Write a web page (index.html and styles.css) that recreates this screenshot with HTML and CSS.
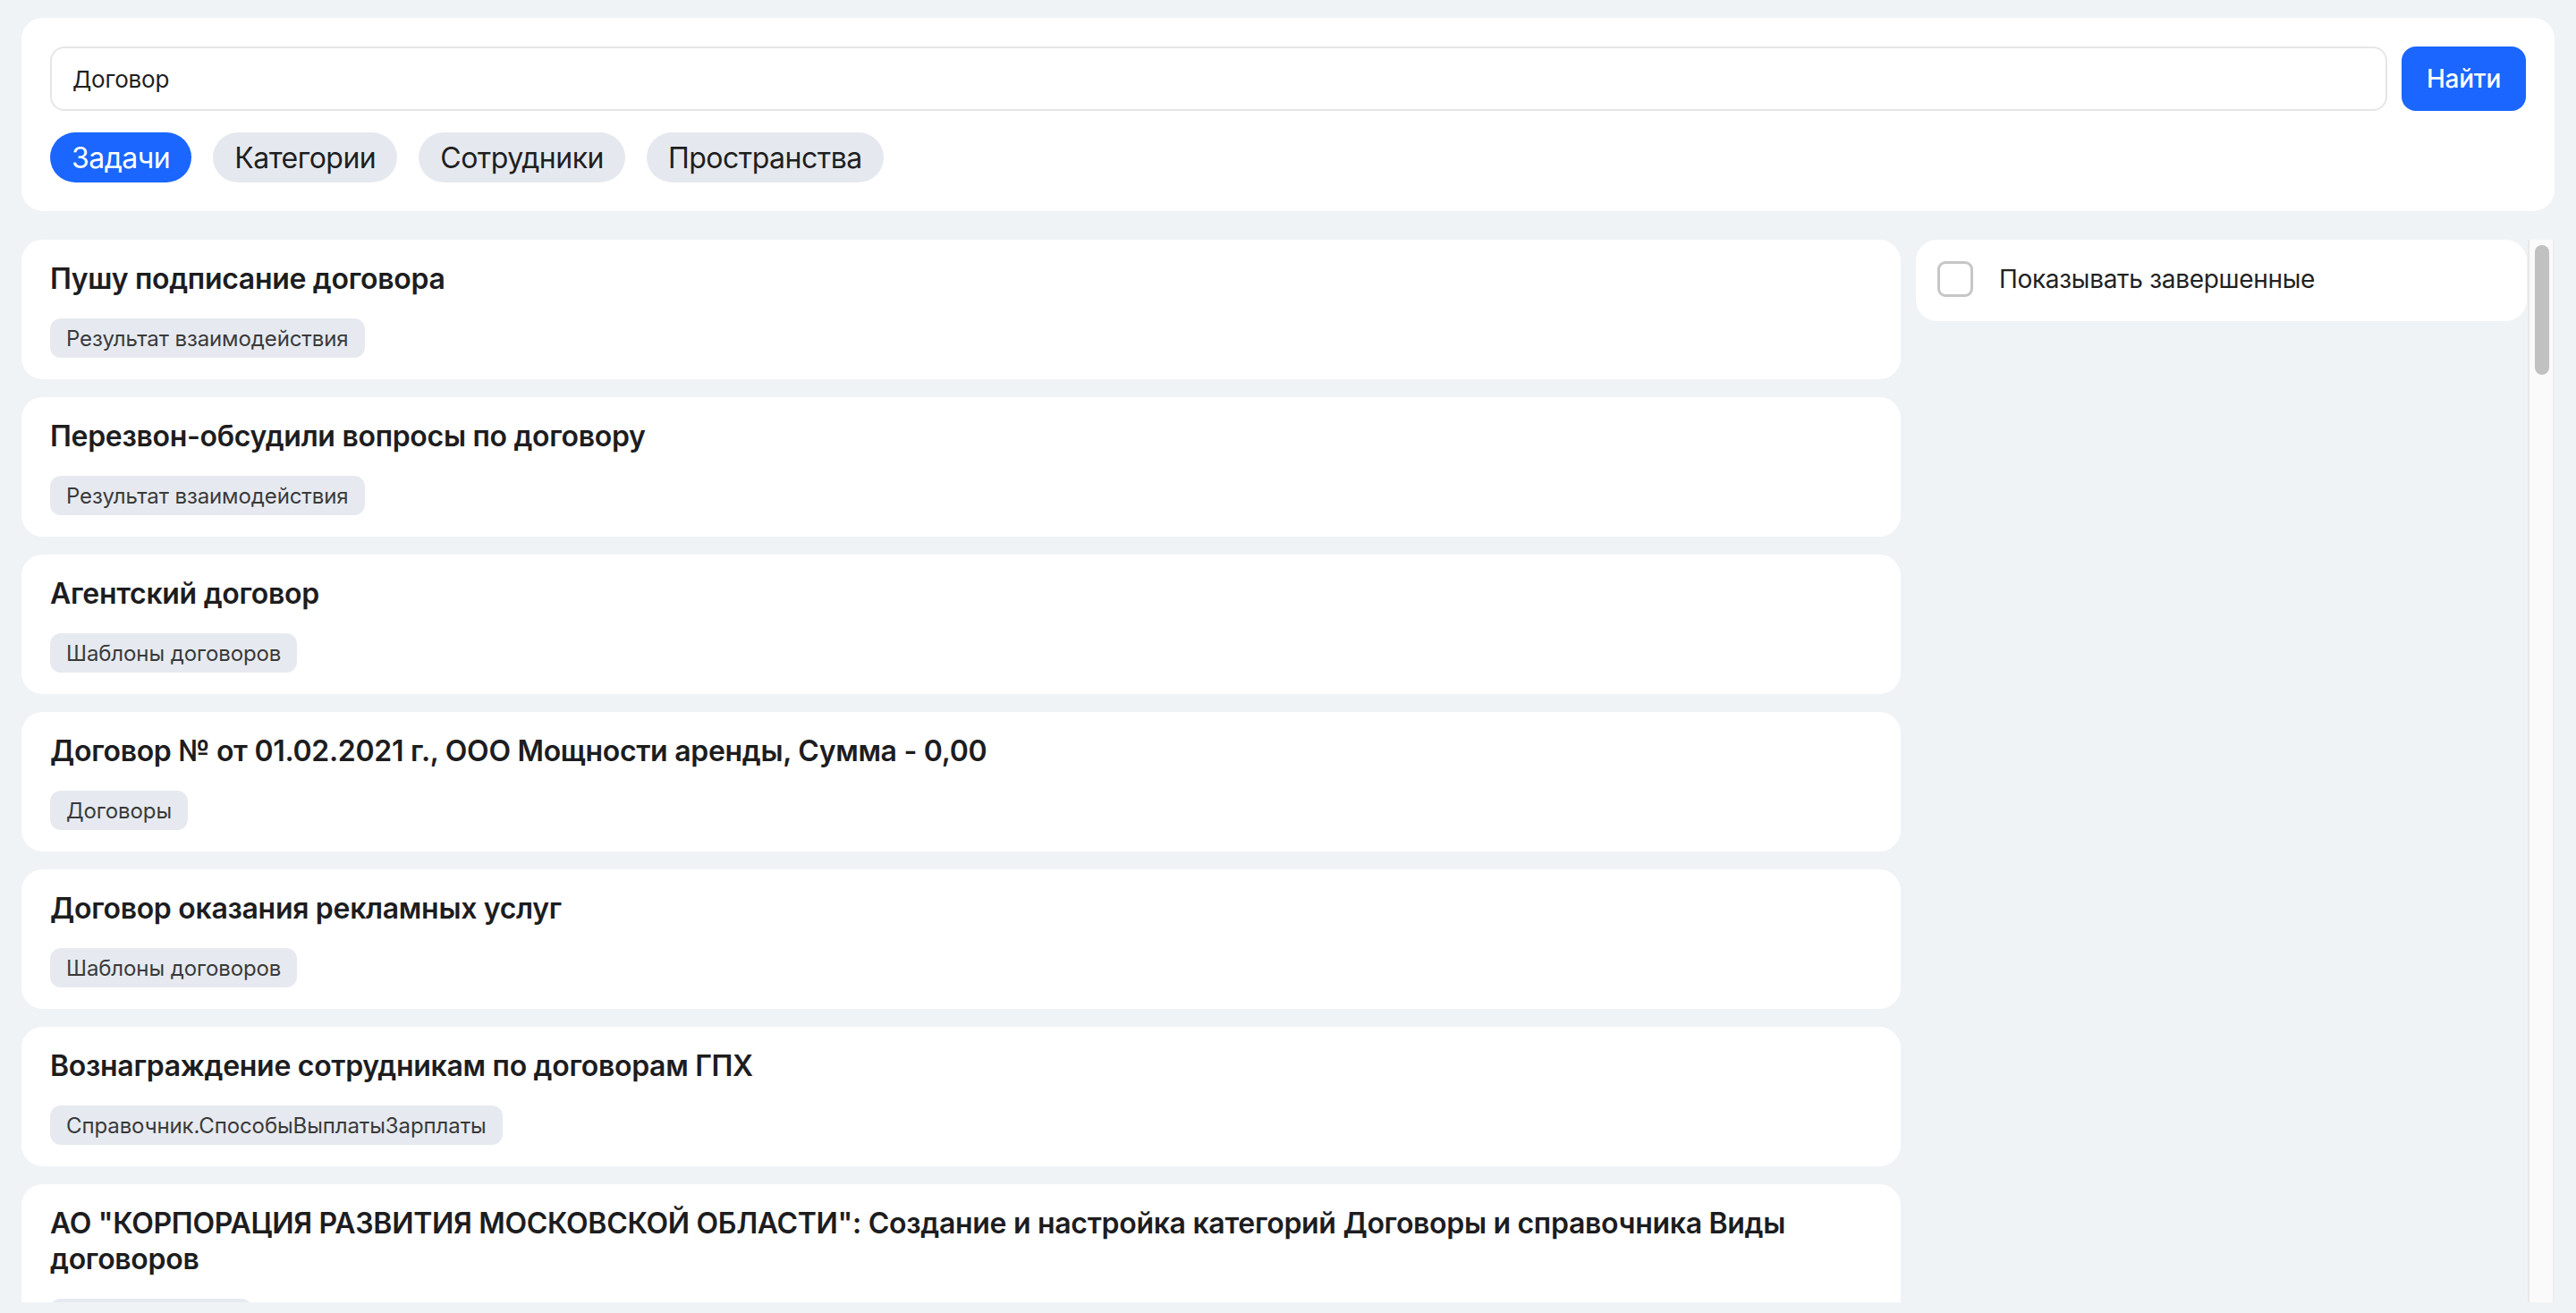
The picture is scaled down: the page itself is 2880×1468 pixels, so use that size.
FILE: index.html
```html
<!DOCTYPE html>
<html lang="ru">
<head>
<meta charset="utf-8">
<title>Поиск</title>
<link rel="stylesheet" href="styles.css">
</head>
<body>
<section class="search-panel">
  <div class="search-row">
    <input class="search-input" type="text" value="Договор">
    <button class="search-btn" type="button">Найти</button>
  </div>
  <div class="tabs">
    <button class="tab tab-active" type="button">Задачи</button>
    <button class="tab" type="button">Категории</button>
    <button class="tab" type="button">Сотрудники</button>
    <button class="tab" type="button">Пространства</button>
  </div>
</section>
<div class="results">
  <main class="results-scroll">
    <div class="list">
      <article class="card"><h3 class="card-title">Пушу подписание договора</h3><span class="tag">Результат взаимодействия</span></article>
      <article class="card"><h3 class="card-title">Перезвон-обсудили вопросы по договору</h3><span class="tag">Результат взаимодействия</span></article>
      <article class="card"><h3 class="card-title">Агентский договор</h3><span class="tag">Шаблоны договоров</span></article>
      <article class="card"><h3 class="card-title">Договор № от 01.02.2021 г., ООО Мощности аренды, Сумма - 0,00</h3><span class="tag">Договоры</span></article>
      <article class="card"><h3 class="card-title">Договор оказания рекламных услуг</h3><span class="tag">Шаблоны договоров</span></article>
      <article class="card"><h3 class="card-title">Вознаграждение сотрудникам по договорам ГПХ</h3><span class="tag">Справочник.СпособыВыплатыЗарплаты</span></article>
      <article class="card"><h3 class="card-title">АО "КОРПОРАЦИЯ РАЗВИТИЯ МОСКОВСКОЙ ОБЛАСТИ": Создание и настройка категорий Договоры и справочника Виды договоров</h3><span class="tag">Внедрение CRM</span></article>
      <article class="card"><h3 class="card-title">Согласование договора поставки</h3><span class="tag">Договоры</span></article>
      <article class="card"><h3 class="card-title">Подготовить дополнительное соглашение к договору аренды</h3><span class="tag">Договоры</span></article>
      <article class="card"><h3 class="card-title">Договор подряда на ремонт офиса</h3><span class="tag">Шаблоны договоров</span></article>
      <article class="card"><h3 class="card-title">Проверка договора юристом</h3><span class="tag">Результат взаимодействия</span></article>
      <article class="card"><h3 class="card-title">Договор купли-продажи оборудования</h3><span class="tag">Шаблоны договоров</span></article>
      <article class="card"><h3 class="card-title">Отправить скан договора клиенту</h3><span class="tag">Результат взаимодействия</span></article>
      <article class="card"><h3 class="card-title">Договор № 15/2021 от 12.03.2021 г., ООО Альфа, Сумма - 150 000,00</h3><span class="tag">Договоры</span></article>
      <article class="card"><h3 class="card-title">Продление договора обслуживания</h3><span class="tag">Договоры</span></article>
      <article class="card"><h3 class="card-title">Договор возмездного оказания услуг</h3><span class="tag">Шаблоны договоров</span></article>
      <article class="card"><h3 class="card-title">Реестр договоров за 2021 год</h3><span class="tag">Справочник.ВидыДоговоров</span></article>
      <article class="card"><h3 class="card-title">Напомнить о сроке действия договора</h3><span class="tag">Результат взаимодействия</span></article>
      <article class="card"><h3 class="card-title">Договор аренды нежилого помещения</h3><span class="tag">Шаблоны договоров</span></article>
      <article class="card"><h3 class="card-title">Расторжение договора с поставщиком</h3><span class="tag">Договоры</span></article>
    </div>
    <aside class="side">
      <label class="filter-card">
        <input class="check" type="checkbox">
        <span class="check-label">Показывать завершенные</span>
      </label>
    </aside>
  </main>
  <div class="scrollbar" aria-hidden="true">
    <div class="scrollbar-thumb"></div>
  </div>
</div>
</body>
</html>
```
FILE: styles.css
```css
* { box-sizing: border-box; }

html, body { height: 100%; }

body {
  margin: 0;
  height: 100vh;
  padding: 20px 24px 12px;
  display: flex;
  flex-direction: column;
  gap: 32px;
  overflow: hidden;
  background: #f0f3f6;
  font-family: Inter, "Noto Sans", sans-serif;
  color: #1d1d1f;
}

.search-panel {
  background: #ffffff;
  border-radius: 24px;
  padding: 32px;
  flex: none;
}

.search-row {
  display: flex;
  gap: 16px;
}

.search-input {
  flex: 1;
  height: 72px;
  border: 2px solid #e6e6e6;
  border-radius: 16px;
  padding: 0 23px;
  font-family: Inter, sans-serif;
  font-size: 26px;
  letter-spacing: -0.2px;
  color: #1f1f1f;
  background: #ffffff;
  outline: none;
}

.search-btn {
  width: 139px;
  height: 72px;
  border: none;
  border-radius: 16px;
  background: #1a66ff;
  color: #ffffff;
  font-family: Inter, sans-serif;
  font-size: 28px;
  font-weight: 500;
  letter-spacing: -0.2px;
  padding: 0;
}

.tabs {
  display: flex;
  gap: 24px;
  margin-top: 24px;
}

.tab {
  height: 56px;
  padding: 0 24px;
  border: none;
  border-radius: 28px;
  background: #e5e9ef;
  color: #1f1f1f;
  font-family: Inter, sans-serif;
  font-size: 32px;
  font-weight: 400;
  letter-spacing: -0.5px;
}

.tab-active {
  background: #1a66ff;
  color: #ffffff;
}

.results {
  flex: 1;
  min-height: 0;
  display: flex;
}

.results-scroll {
  flex: 1;
  min-width: 0;
  overflow-y: auto;
  scrollbar-width: none;
  display: grid;
  grid-template-columns: 1fr 683px;
  gap: 17px;
  align-items: start;
  padding-right: 1px;
}

.results-scroll::-webkit-scrollbar {
  display: none;
}

.scrollbar {
  flex: none;
  width: 30px;
  background: #fafafa;
  border-left: 2px solid #e8e8e8;
  border-right: 2px solid #eeeeee;
  padding: 6px 4px 0 6px;
}

.scrollbar-thumb {
  width: 16px;
  height: 145px;
  border-radius: 8px;
  background: #c1c1c1;
}

.list {
  display: flex;
  flex-direction: column;
  gap: 20px;
}

.card {
  background: #ffffff;
  border-radius: 24px;
  padding: 24px 32px;
  display: flex;
  flex-direction: column;
  align-items: flex-start;
  gap: 24px;
}

.card-title {
  margin: 0;
  font-size: 32px;
  line-height: 40px;
  font-weight: 600;
  letter-spacing: -0.3px;
  color: #1d1d1f;
}

.tag {
  display: inline-flex;
  align-items: center;
  height: 44px;
  padding: 0 18px;
  border-radius: 12px;
  background: #e6eaf0;
  color: #3a3a3a;
  font-size: 24px;
  letter-spacing: -0.1px;
}

.side {
  display: flex;
  flex-direction: column;
}

.filter-card {
  background: #ffffff;
  border-radius: 24px;
  padding: 24px 24px 27px;
  display: flex;
  align-items: flex-start;
  gap: 29px;
}

.check {
  appearance: none;
  -webkit-appearance: none;
  margin: 0;
  width: 40px;
  height: 40px;
  flex: none;
  border: 3px solid #c6c6c6;
  border-radius: 9px;
  background: #ffffff;
}

.check-label {
  font-size: 28px;
  line-height: 40px;
  letter-spacing: -0.3px;
  color: #222222;
}
```
